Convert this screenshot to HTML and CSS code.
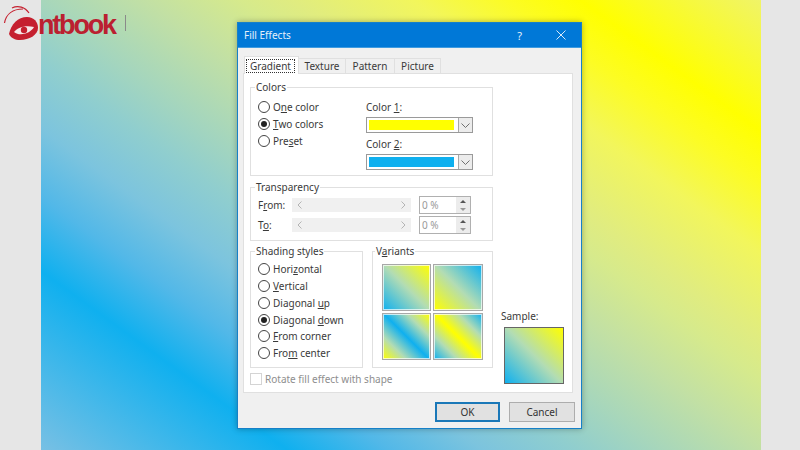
FILE: index.html
```html
<!DOCTYPE html>
<html lang="en">
<head>
<meta charset="utf-8">
<title>Fill Effects</title>
<link rel="stylesheet" href="styles.css">
</head>
<body>
<div class="stage">
  <div class="canvas">
    <div class="dialog">
      <div class="titlebar">
        <span class="title">Fill Effects</span>
        <span class="help">?</span>
        <svg class="close" width="10" height="10" viewBox="0 0 10 10"><path d="M.5.500l9 9M9.500.500l-9 9" stroke="#dbeaf8" fill="none"/></svg>
      </div>
      <div class="body">
        <div class="tabs">
          <span class="tab active"><span class="focus">Gradient</span></span>
          <span class="tab t2">Texture</span>
          <span class="tab t3">Pattern</span>
          <span class="tab t4">Picture</span>
        </div>
        <div class="panel">
          <div class="left">
            <fieldset class="group colors">
              <legend>Colors</legend>
              <div class="radios">
                <label class="radio"><i></i><span>O<u>n</u>e color</span></label>
                <label class="radio on"><i></i><span><u>T</u>wo colors</span></label>
                <label class="radio"><i></i><span>Pre<u>s</u>et</span></label>
              </div>
              <div class="pickers">
                <span class="plabel">Color <u>1</u>:</span>
                <div class="combo"><b class="yellow"></b><span class="arrow"><svg width="9" height="5" viewBox="0 0 9 5"><path d="M.5.500l4 4 4-4" fill="none" stroke="#707070"/></svg></span></div>
                <span class="plabel second">Color <u>2</u>:</span>
                <div class="combo"><b class="blue"></b><span class="arrow"><svg width="9" height="5" viewBox="0 0 9 5"><path d="M.5.500l4 4 4-4" fill="none" stroke="#707070"/></svg></span></div>
              </div>
            </fieldset>
            <fieldset class="group transparency">
              <legend>Transparency</legend>
              <div class="trow">
                <span class="tlabel">F<u>r</u>om:</span>
                <div class="slider">
                  <svg width="5" height="8" viewBox="0 0 5 8"><path d="M4.500.500L1 4l3.500 3.500" fill="none" stroke="#b4b4b4"/></svg>
                  <svg width="5" height="8" viewBox="0 0 5 8"><path d="M.5.500L4 4 .5 7.500" fill="none" stroke="#b4b4b4"/></svg>
                </div>
                <div class="spin"><span class="val">0 %</span><span class="btns"><em class="up"></em><em class="down"></em></span></div>
              </div>
              <div class="trow">
                <span class="tlabel">T<u>o</u>:</span>
                <div class="slider">
                  <svg width="5" height="8" viewBox="0 0 5 8"><path d="M4.500.500L1 4l3.500 3.500" fill="none" stroke="#b4b4b4"/></svg>
                  <svg width="5" height="8" viewBox="0 0 5 8"><path d="M.5.500L4 4 .5 7.500" fill="none" stroke="#b4b4b4"/></svg>
                </div>
                <div class="spin"><span class="val">0 %</span><span class="btns"><em class="up"></em><em class="down"></em></span></div>
              </div>
            </fieldset>
            <div class="lower">
              <fieldset class="group shading">
                <legend>Shading styles</legend>
                <label class="radio"><i></i><span>Hori<u>z</u>ontal</span></label>
                <label class="radio"><i></i><span><u>V</u>ertical</span></label>
                <label class="radio"><i></i><span>Diagonal <u>u</u>p</span></label>
                <label class="radio on"><i></i><span>Diagonal <u>d</u>own</span></label>
                <label class="radio"><i></i><span><u>F</u>rom corner</span></label>
                <label class="radio"><i></i><span>Fro<u>m</u> center</span></label>
              </fieldset>
              <fieldset class="group variants">
                <legend>V<u>a</u>riants</legend>
                <div class="vgrid">
                  <div class="swatch v1"></div>
                  <div class="swatch v2"></div>
                  <div class="swatch v3"></div>
                  <div class="swatch v4"></div>
                </div>
              </fieldset>
            </div>
            <label class="rotate"><i></i><span>Rotate fill effect with shape</span></label>
          </div>
          <div class="sample">
            <span class="slabel">Sample:</span>
            <div class="sbox"></div>
          </div>
        </div>
        <div class="buttons">
          <button class="btn ok">OK</button>
          <button class="btn">Cancel</button>
        </div>
      </div>
    </div>
  </div>
  <div class="logo">
    <svg class="mark" width="40" height="40" viewBox="0 0 40 40">
      <path d="M2.500 21C4 12 11 7 21 7" fill="none" stroke="#c5202f" stroke-width="1.200"/>
      <path d="M10 6C16 3 23 5 27 11" fill="none" stroke="#c5202f" stroke-width="1.200"/>
      <path d="M7 32C9 22 16 15 25 15C32 15 36 20 36 26C36 33 27 38 18 38C13 38 9 36 7 32Z" fill="#c5202f"/>
      <path d="M12 30C16 25 24 23 32 25C29 31 18 35 12 30Z" fill="#f4e9e9"/>
      <circle cx="22" cy="28" r="3.200" fill="#c5202f"/>
    </svg>
    <span class="word">ntbook</span>
    <span class="sep"></span>
  </div>
</div>
</body>
</html>
```

FILE: styles.css
```css
* { box-sizing: border-box; }
html, body { margin: 0; padding: 0; }
body { width: 800px; height: 450px; overflow: hidden; background: #e6e6e6; font-family: "Noto Sans", "Open Sans", sans-serif; }
.stage { position: relative; width: 800px; height: 450px; padding: 0 39px 0 41px; }
.canvas { position: relative; height: 450px;
  background: linear-gradient(36deg, #78c0e4 0%, #0fb0ef 18.400%, #52b8e8 26%, #7cc4de 33%, #90cece 40%, #a6d6bc 46%, #c2e0a4 54%, #d6ea8c 61%, #e0ec80 65%, #f2f65c 74%, #fcfc24 81%, #ffff00 86.500%, #f0f468 100%); }
.dialog { position: absolute; left: 196px; top: 22px; width: 345px; height: 407px; background: #f0f0f0; border: 1px solid #1680c8; display: flex; flex-direction: column; font-size: 10px; color: #3a3a3a; box-shadow: 0 0 6px rgba(0,0,0,.3); }
.titlebar { height: 25px; flex: none; background: #0078d7; color: #e6f1fa; display: flex; align-items: center; padding: 0 15px 0 6px; border-bottom: 1px solid #3f9be0; }
.title { flex: 1; }
.help { margin-right: 34px; font-size: 11px; }
.body { flex: 1; padding: 8px 8px 0 5px; display: flex; flex-direction: column; }
.tabs { display: flex; height: 17px; padding-left: 1px; align-items: flex-end; }
.tab { height: 15px; line-height: 14px; text-align: center; border: 1px solid #e0e0e0; border-bottom: 0; border-left: 0; background: #f0f0f0; }
.t2 { width: 47px; }
.t3 { width: 49px; }
.t4 { width: 46px; }
.tab.active { width: 55px; background: #fff; height: 18px; margin-bottom: -1px; position: relative; z-index: 1; border-left: 1px solid #e0e0e0; padding: 2px 3px 0 1px; }
.focus { display: block; border: 1px dotted #333; line-height: 12px; height: 14px; }
.panel { height: 320px; background: #fff; border: 1px solid #e0e0e0; display: flex; padding: 8px 0 0 6px; }
.left { width: 243px; }
.group { margin: 0; padding: 0; border: 1px solid #e0e0e0; min-width: 0; }
.group legend { padding: 0 1px; margin-left: -3px; line-height: 10px; height: 10px; }
.colors { height: 94px; display: flex; padding: 7px 0 0 7px; }
.radios { width: 108px; }
.radio { display: flex; align-items: center; height: 16.750px; gap: 3px; }
.radio i { width: 12px; height: 12px; border: 1px solid #444; border-radius: 50%; background: #fff; flex: none; position: relative; }
.radio.on i::after { content: ""; position: absolute; left: 2px; top: 2px; width: 6px; height: 6px; border-radius: 50%; background: #222; }
.pickers { display: flex; flex-direction: column; margin-top: 2px; }
.plabel { line-height: 12px; }
.plabel.second { margin-top: 5px; }
.combo { width: 107px; height: 16px; margin-top: 4px; border: 1px solid #9a9a9a; display: flex; background: #fff; padding: 2px 0 2px 2px; }
.combo b { width: 85px; height: 10px; }
.yellow { background: #ffff00; }
.blue { background: #0fb0ef; }
.arrow { margin: -2px 0 -2px 4px; width: 14px; background: #ececec; border-left: 1px solid #a8a8a8; display: flex; align-items: center; justify-content: center; }
.transparency { margin-top: 6px; height: 59px; padding: 3px 0 0 7px; }
.trow { display: flex; align-items: center; height: 20px; }
.tlabel { width: 34px; }
.slider { width: 119px; height: 14px; background: #f0f0f0; display: flex; justify-content: space-between; align-items: center; padding: 0 5px; }
.spin { margin-left: 8px; width: 52px; height: 18px; border: 1px solid #b0b0b0; display: flex; color: #9a9a9a; background: #fff; }
.val { flex: 1; padding-left: 2px; line-height: 17px; }
.btns { width: 14px; display: flex; flex-direction: column; background: #ececec; }
.btns em { flex: 1; display: flex; align-items: center; justify-content: center; }
.up::after { content: ""; border: 3px solid transparent; border-top: 0; border-bottom: 3px solid #555; }
.down::after { content: ""; border: 3px solid transparent; border-bottom: 0; border-top: 3px solid #999; }
.lower { display: flex; gap: 9px; margin-top: 5px; }
.shading { width: 113px; height: 122px; padding: 5px 0 0 7px; }
.variants { width: 121px; height: 122px; padding: 8px 0 0 9px; }
.group.variants legend { margin-left: -7px; }
.vgrid { display: grid; grid-template-columns: 49px 50px; gap: 2px; }
.swatch { height: 47px; border: 1px solid #a8a8a8; outline: 1px solid rgba(255,255,255,.7); outline-offset: -2px; }
.v1 { background: linear-gradient(45deg, #0fb0ef, #b2dcb4 50%, #ffff00); }
.v2 { background: linear-gradient(45deg, #ffff00, #b2dcb4 50%, #0fb0ef); }
.v3 { background: linear-gradient(45deg, #ffff00, #b2dcb4 25%, #0fb0ef 50%, #b2dcb4 75%, #ffff00); }
.v4 { background: linear-gradient(45deg, #0fb0ef, #b2dcb4 25%, #ffff00 50%, #b2dcb4 75%, #0fb0ef); }
.rotate { display: flex; align-items: center; gap: 3px; margin-top: 5px; height: 12px; color: #8e8e8e; }
.rotate i { width: 12px; height: 12px; border: 1px solid #d4d4d4; background: #fff; }
.sample { padding: 228px 0 0 8px; }
.slabel { display: block; line-height: 12px; }
.sbox { width: 60px; height: 57px; margin: 5px 0 0 3px; border: 1px solid #666; background: linear-gradient(45deg, #0fb0ef, #b2dcb4 50%, #ffff00); }
.buttons { display: flex; justify-content: flex-end; gap: 9px; margin: 9px -2px 0 0; }
.btn { width: 66px; height: 20px; padding: 0; font: inherit; color: #333; background: #e1e1e1; border: 1px solid #adadad; }
.btn.ok { border: 2px solid #1a78b8; width: 65px; }
.logo { position: absolute; left: 2px; top: 2px; display: flex; align-items: center; }
.mark { flex: none; }
.word { font-family: "Liberation Sans", sans-serif; font-weight: 700; font-size: 27px; letter-spacing: -2.200px; color: #bb2030; margin: 6px 0 0 -4px; }
.sep { width: 1px; height: 16px; background: #8a8a8a; margin: 2px 0 0 10px; }
```
